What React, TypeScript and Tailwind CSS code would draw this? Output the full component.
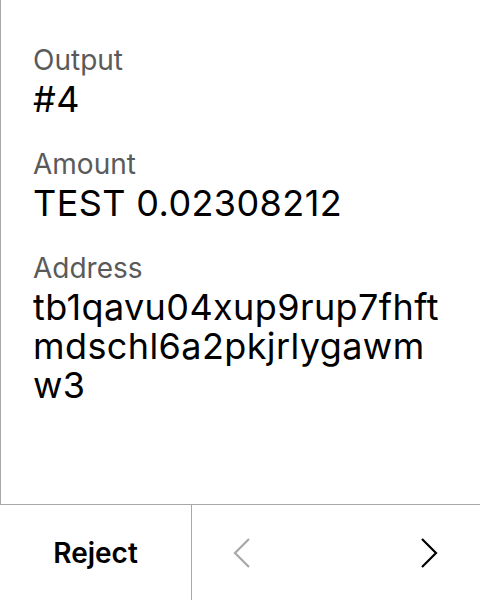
const fields = [
  { label: "Output", value: "#4" },
  { label: "Amount", value: "TEST 0.02308212" },
  { label: "Address", value: "tb1qavu04xup9rup7fhftmdschl6a2pkjrlygawmw3" },
];

function Chevron({ dir, className }: { dir: "left" | "right"; className: string }) {
  return (
    <svg width="20" height="32" viewBox="0 0 20 32" fill="none" className={className}>
      <path
        d={dir === "left" ? "M17 2 L3 16 L17 30" : "M3 2 L17 16 L3 30"}
        stroke="currentColor"
        strokeWidth="2.2"
      />
    </svg>
  );
}

export default function App() {
  return (
    <div className="w-[480px] h-[600px] flex flex-col bg-white font-['Inter',sans-serif]">
      <div className="h-[504px] border-l border-[#a8a8a8] px-8 pt-[40px] flex flex-col gap-[25px]">
        {fields.map((f) => (
          <div key={f.label} className="flex flex-col">
            <span className="text-[28px] leading-[40px] text-[#5a5a5a]">{f.label}</span>
            <span className="text-[36px] leading-[39px] tracking-[0.4px] text-black break-all">
              {f.value}
            </span>
          </div>
        ))}
      </div>
      <div className="flex-1 flex border-t border-[#a8a8a8]">
        <button className="w-[192px] border-r border-[#a8a8a8] text-[28px] font-semibold text-black">
          Reject
        </button>
        <div className="flex-1 flex items-center justify-between pl-[40px] pr-[41px]">
          <Chevron dir="left" className="text-[#a8a8a8]" />
          <Chevron dir="right" className="text-black" />
        </div>
      </div>
    </div>
  );
}
